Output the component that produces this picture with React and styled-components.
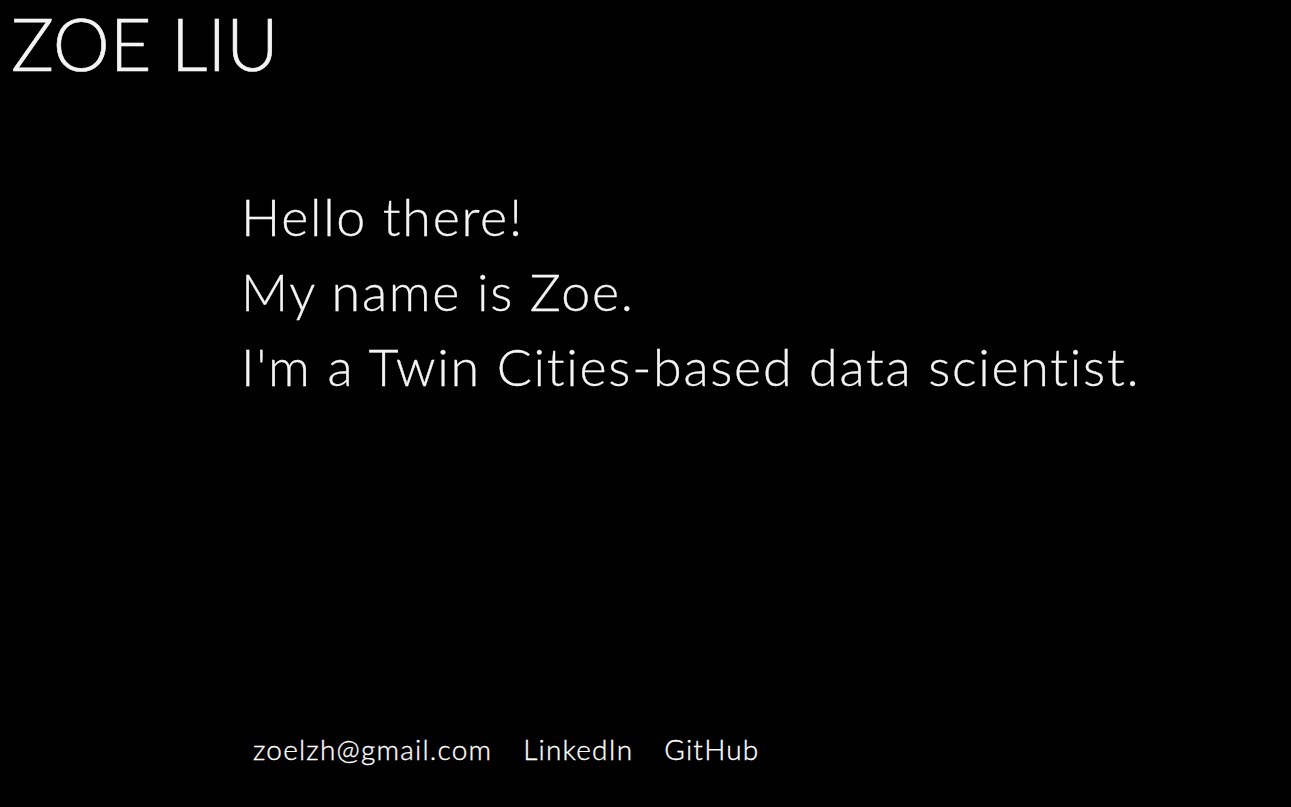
import React from "react";
import styled, { createGlobalStyle } from "styled-components";

const GlobalStyle = createGlobalStyle`
  html, body {
    margin: 0;
    padding: 0;
    background: #000;
  }
  body {
    font-family: Lato, "Open Sans", sans-serif;
    font-variant-ligatures: none;
    color: #f4f4f4;
  }
`;

const Page = styled.div`
  display: flex;
  flex-direction: column;
  height: 807px;
  background: #000;
  overflow: hidden;
`;

const Title = styled.h1`
  margin: 0;
  padding: 1px 0 0 11px;
  font-size: 72px;
  font-weight: 300;
  line-height: 84px;
  letter-spacing: 0;
  -webkit-text-stroke: 0.6px #f4f4f4;
`;

const Intro = styled.main`
  padding: 94px 0 0 241px;
  flex: 1;
`;

const Line = styled.p`
  margin: 0;
  font-size: 52px;
  font-weight: 300;
  line-height: 75px;
  letter-spacing: 1.7px;
  -webkit-text-stroke: 0.3px #f4f4f4;
`;

const Footer = styled.footer`
  display: flex;
  gap: 31px;
  padding: 0 0 40px 253px;
`;

const Link = styled.a`
  color: #ffffff;
  text-decoration: none;
  font-size: 28px;
  font-weight: 300;
  line-height: 36px;
  letter-spacing: 1.2px;
  -webkit-text-stroke: 0.35px #ffffff;
`;

export default function App() {
  return (
    <>
      <GlobalStyle />
      <Page>
        <Title>ZOE LIU</Title>
        <Intro>
          <Line>Hello there!</Line>
          <Line>My name is Zoe.</Line>
          <Line>I'm a Twin Cities-based data scientist.</Line>
        </Intro>
        <Footer>
          <Link href="mailto:zoelzh@gmail.com">zoelzh@gmail.com</Link>
          <Link href="#">LinkedIn</Link>
          <Link href="#">GitHub</Link>
        </Footer>
      </Page>
    </>
  );
}
